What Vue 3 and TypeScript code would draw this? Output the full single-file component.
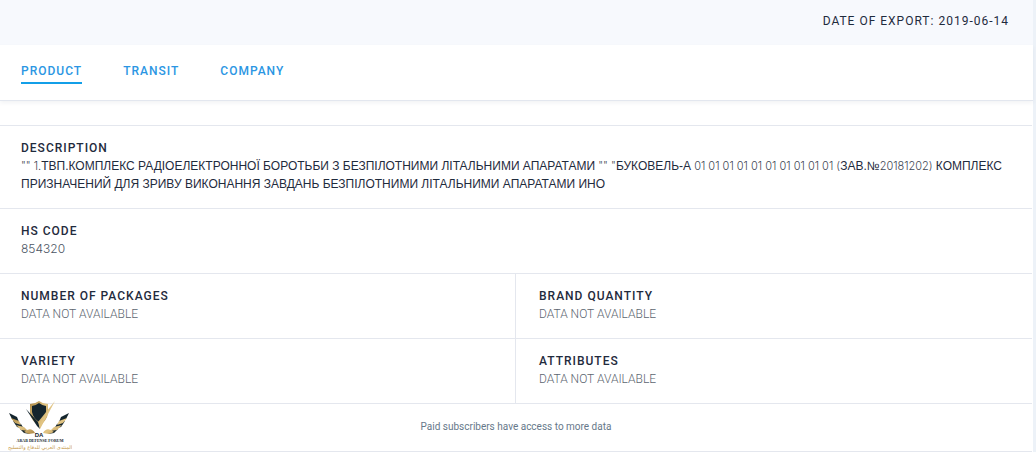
<script setup lang="ts">
import { ref } from 'vue'

interface Field {
  label: string
  value: string
}

const tabs: string[] = ['PRODUCT', 'TRANSIT', 'COMPANY']
const active = ref<string>('PRODUCT')

const pairs: Field[][] = [
  [
    { label: 'NUMBER OF PACKAGES', value: 'DATA NOT AVAILABLE' },
    { label: 'BRAND QUANTITY', value: 'DATA NOT AVAILABLE' },
  ],
  [
    { label: 'VARIETY', value: 'DATA NOT AVAILABLE' },
    { label: 'ATTRIBUTES', value: 'DATA NOT AVAILABLE' },
  ],
]
</script>

<template>
  <main class="page">
    <div class="sheet">
      <header class="top">DATE OF EXPORT: 2019-06-14</header>
      <nav class="tabs">
        <a
          v-for="tab in tabs"
          :key="tab"
          :href="'#' + tab.toLowerCase()"
          class="tab"
          :class="{ active: tab === active }"
          @click.prevent="active = tab"
        >{{ tab }}</a>
      </nav>

      <section class="details">
        <div class="row">
          <div class="cell">
            <h2 class="label">DESCRIPTION</h2>
            <p class="value description"><span class="latin">"" 1.</span>ТВП.КОМПЛЕКС РАДІОЕЛЕКТРОННОЇ БОРОТЬБИ З БЕЗПІЛОТНИМИ ЛІТАЛЬНИМИ АПАРАТАМИ<span class="latin"> "" "</span>БУКОВЕЛЬ-А<span class="latin"> 01 01 01 01 01 01 01 01 01 01 (</span>ЗАВ.№<span class="latin">20181202) </span>КОМПЛЕКС ПРИЗНАЧЕНИЙ ДЛЯ ЗРИВУ ВИКОНАННЯ ЗАВДАНЬ БЕЗПІЛОТНИМИ ЛІТАЛЬНИМИ АПАРАТАМИ ИНО</p>
          </div>
        </div>
        <div class="row">
          <div class="cell">
            <h2 class="label">HS CODE</h2>
            <p class="value code">854320</p>
          </div>
        </div>
        <div v-for="(pair, i) in pairs" :key="i" class="row split">
          <div v-for="field in pair" :key="field.label" class="cell">
            <h2 class="label">{{ field.label }}</h2>
            <p class="value missing">{{ field.value }}</p>
          </div>
        </div>
      </section>

      <footer class="foot">
        Paid subscribers have access to more data
        <svg class="badge" viewBox="0 0 64 52" role="img" aria-label="Arab Defense Forum">
          <defs>
            <linearGradient id="gold" x1="0" y1="0" x2="1" y2="1">
              <stop offset="0" stop-color="#a8843f" />
              <stop offset="0.5" stop-color="#e2c584" />
              <stop offset="1" stop-color="#ab8643" />
            </linearGradient>
          </defs>
          <path fill="url(#gold)" d="M31 0 Q35 3 40 3 V12 Q39 20 31 25 Q23 20 22 12 V3 Q27 3 31 0Z" />
          <path fill="#14252d" d="M31 2 Q35 5 38 5 V11 Q37 17 31 21 Q25 17 24 11 V5 Q27 5 31 2Z" />
          <path fill="#14252d" d="M18 8 L31 22 L32 28 L29 25Z" />
          <path fill="url(#gold)" d="M30 21 L47 0 L32 28Z" />
          <path fill="#14252d" d="M1 12 L9 16 L11 21 L4 18Z M5 20 L13 23 L16 28 L9 26Z M12 28 L18 29 L22 33 L16 32Z" />
          <path fill="url(#gold)" d="M3 17 L11 20 L13 24 L7 22Z M8 24 L16 26 L20 30 L13 29Z M16 31 Q23 25 27 32 L21 33Z" />
          <path fill="#14252d" d="M61 12 L53 16 L51 21 L58 18Z M57 20 L49 23 L46 28 L53 26Z M50 28 L44 29 L40 33 L46 32Z" />
          <path fill="url(#gold)" d="M59 17 L51 20 L49 24 L55 22Z M54 24 L46 26 L42 30 L49 29Z M46 31 Q39 25 35 32 L41 33Z" />
          <text class="mark" x="31" y="36" text-anchor="middle">DA</text>
          <text class="name" x="32" y="41" text-anchor="middle">ARAB DEFENSE FORUM</text>
          <text class="arabic" x="32" y="48" text-anchor="middle">المنتدى العربي للدفاع والتسليح</text>
        </svg>
      </footer>
    </div>
  </main>
</template>

<style>
body {
  margin: 0;
  background: #fff;
}
</style>

<style scoped>
.page {
  padding-right: 3px;
  background: #edf2f8;
  font-family: Roboto, "Liberation Sans", sans-serif;
  font-size: 12px;
  line-height: 18px;
  color: #1f2b3d;
}
.sheet {
  background: #fff;
}
.top {
  padding: 12px 24px 15px;
  background: #f7f9fd;
  text-align: right;
  letter-spacing: 1px;
}
.tabs {
  display: flex;
  gap: 41px;
  padding: 17px 21px 16px;
  border-bottom: 1px solid #e3e7ef;
  box-shadow: 0 2px 4px rgba(30, 50, 80, 0.06);
}
.tab {
  padding-bottom: 2px;
  border-bottom: 2px solid transparent;
  color: #2b96e3;
  font-weight: 500;
  letter-spacing: 1px;
  text-decoration: none;
}
.tab.active {
  border-color: #139fe8;
}
.details {
  padding-top: 24px;
}
.row {
  margin-right: 1px;
  border-top: 1px solid #e4e7ee;
}
.split {
  display: grid;
  grid-template-columns: 1fr 1fr;
}
.cell {
  padding: 13px 21px 15px;
}
.split .cell:first-child {
  border-right: 1px solid #e4e7ee;
}
.split .cell + .cell {
  padding-left: 23px;
}
.label {
  margin: 0;
  font-size: 12px;
  line-height: 18px;
  font-weight: 500;
  letter-spacing: 1px;
}
.value {
  margin: 0;
}
.description {
  font-family: "Liberation Sans", sans-serif;
}
.latin {
  color: #3f4855;
  font-family: Inter, sans-serif;
  font-size: 11px;
  font-weight: 300;
}
.code {
  color: #4b5563;
  font-family: Inter, sans-serif;
  font-weight: 300;
}
.missing {
  color: #5c6570;
  font-weight: 300;
}
.foot {
  position: relative;
  margin-right: 1px;
  padding: 14px 0 15px;
  border-top: 1px solid #e4e7ee;
  border-bottom: 1px solid #e4e7ee;
  color: #66788a;
  font-size: 10px;
  text-align: center;
}
.badge {
  position: absolute;
  left: 8px;
  bottom: -2px;
  width: 64px;
  height: 52px;
}
.mark {
  fill: #14252d;
  font: 700 6px "Liberation Sans", sans-serif;
}
.name {
  fill: #14252d;
  font: 700 4px "Liberation Serif", serif;
}
.arabic {
  fill: #c69a4b;
  font: 5px "DejaVu Sans", sans-serif;
}
</style>
